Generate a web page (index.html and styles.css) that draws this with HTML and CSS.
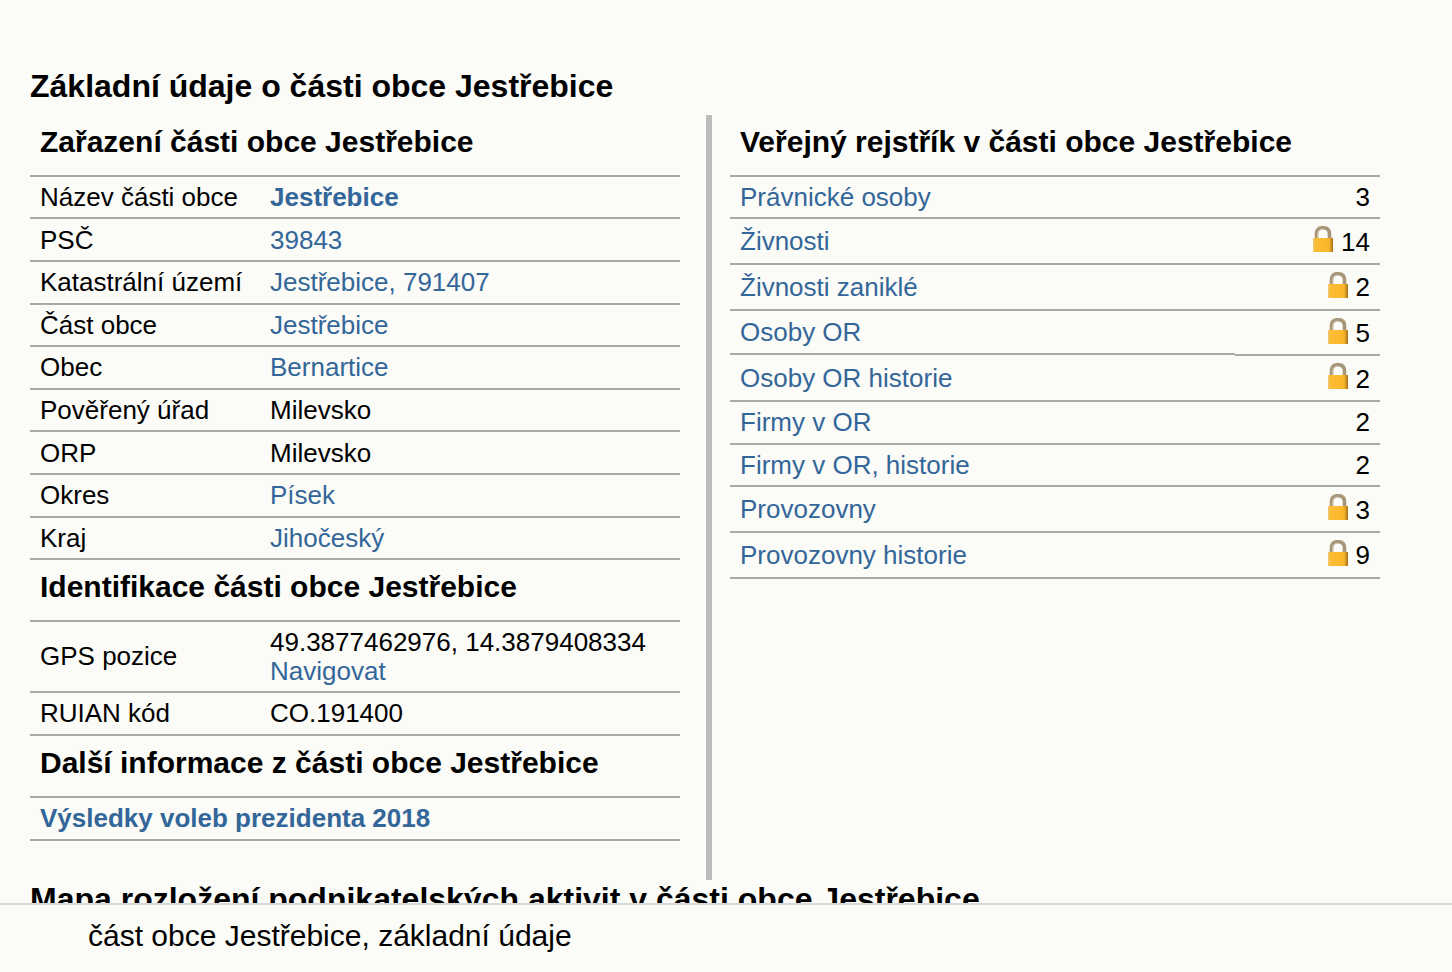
FILE: index.html
```html
<!DOCTYPE html>
<html lang="cs">
<head>
<meta charset="utf-8">
<title>Jestřebice</title>
<link rel="stylesheet" href="styles.css">
</head>
<body>
<svg class="defs" width="0" height="0" aria-hidden="true">
  <defs>
    <linearGradient id="lockBody" x1="0" x2="1" y1="0" y2="0">
      <stop offset="0" stop-color="#f0c878"/>
      <stop offset="0.12" stop-color="#fbbd35"/>
      <stop offset="0.8" stop-color="#fab62a"/>
      <stop offset="1" stop-color="#a8701a"/>
    </linearGradient>
    <symbol id="lock" viewBox="0 0 20 26">
      <path d="M3.500 13V8C3.500 3.500 6 1.700 10 1.700S16.500 3.500 16.500 8V13" fill="none" stroke="#a89678" stroke-width="3.600"/>
      <path d="M4.800 12V8C4.800 4.800 7 3.200 10 3.200" fill="none" stroke="#d8d0c0" stroke-width="1"/>
      <rect x="0" y="12" width="20" height="14" fill="url(#lockBody)"/>
    </symbol>
  </defs>
</svg>
<main class="page">
  <h1 class="title">Základní údaje o části obce Jestřebice</h1>
  <div class="columns">
    <section class="col">
      <h2 class="head">Zařazení části obce Jestřebice</h2>
      <div class="rows">
        <div class="row"><span class="key">Název části obce</span><a class="val strong">Jestřebice</a></div>
        <div class="row"><span class="key">PSČ</span><a class="val">39843</a></div>
        <div class="row"><span class="key">Katastrální území</span><a class="val">Jestřebice, 791407</a></div>
        <div class="row"><span class="key">Část obce</span><a class="val">Jestřebice</a></div>
        <div class="row"><span class="key">Obec</span><a class="val">Bernartice</a></div>
        <div class="row"><span class="key">Pověřený úřad</span><span class="val">Milevsko</span></div>
        <div class="row"><span class="key">ORP</span><span class="val">Milevsko</span></div>
        <div class="row"><span class="key">Okres</span><a class="val">Písek</a></div>
        <div class="row"><span class="key">Kraj</span><a class="val">Jihočeský</a></div>
      </div>
      <h2 class="head">Identifikace části obce Jestřebice</h2>
      <div class="rows">
        <div class="row row-tall"><span class="key">GPS pozice</span><span class="val stack"><span>49.3877462976, 14.3879408334</span><a>Navigovat</a></span></div>
        <div class="row"><span class="key">RUIAN kód</span><span class="val">CO.191400</span></div>
      </div>
      <h2 class="head head-last">Další informace z části obce Jestřebice</h2>
      <div class="rows">
        <div class="row"><a class="key strong">Výsledky voleb prezidenta 2018</a></div>
      </div>
    </section>
    <div class="divider"></div>
    <section class="col">
      <h2 class="head">Veřejný rejstřík v části obce Jestřebice</h2>
      <div class="rows">
        <div class="reg"><a class="name">Právnické osoby</a><span class="count">3</span></div>
        <div class="reg reg-lock"><a class="name">Živnosti</a><span class="count"><svg class="lock"><use href="#lock"/></svg>14</span></div>
        <div class="reg reg-lock"><a class="name">Živnosti zaniklé</a><span class="count"><svg class="lock"><use href="#lock"/></svg>2</span></div>
        <div class="reg reg-lock reg-step"><a class="name">Osoby OR</a><span class="count"><svg class="lock"><use href="#lock"/></svg>5</span></div>
        <div class="reg reg-lock"><a class="name">Osoby OR historie</a><span class="count"><svg class="lock"><use href="#lock"/></svg>2</span></div>
        <div class="reg"><a class="name">Firmy v OR</a><span class="count">2</span></div>
        <div class="reg"><a class="name">Firmy v OR, historie</a><span class="count">2</span></div>
        <div class="reg reg-lock"><a class="name">Provozovny</a><span class="count"><svg class="lock"><use href="#lock"/></svg>3</span></div>
        <div class="reg reg-lock"><a class="name">Provozovny historie</a><span class="count"><svg class="lock"><use href="#lock"/></svg>9</span></div>
      </div>
    </section>
  </div>
  <h2 class="map-title">Mapa rozložení podnikatelských aktivit v části obce Jestřebice</h2>
</main>
<footer class="footer">část obce Jestřebice, základní údaje</footer>
</body>
</html>
```
FILE: styles.css
```css
html, body {
  margin: 0;
  height: 100%;
  overflow: hidden;
}
body {
  background: #fbfbf7;
  color: #000;
  font-family: "Liberation Sans", Arial, sans-serif;
  font-size: 26px;
}
a { color: #336699; }
.defs { position: absolute; }
.page { padding: 67px 0 0 30px; }
.title {
  margin: 0;
  font-size: 32px;
  line-height: 38px;
  font-weight: bold;
}
.columns {
  display: flex;
  margin-top: 10px;
  height: 765px;
}
.col { width: 650px; }
.divider {
  width: 6px;
  margin: 0 18px 0 26px;
  background: #bbbbbb;
}
.head {
  margin: 0;
  box-sizing: border-box;
  height: 59.800px;
  padding: 9.500px 0 0 10px;
  font-size: 30px;
  line-height: 34px;
  font-weight: bold;
}
.head-last {
  height: 60.200px;
  padding-top: 10.200px;
}
.rows { border-top: 2px solid #aaaaaa; }
.row {
  display: flex;
  align-items: center;
  min-height: 40.600px;
  border-bottom: 2px solid #aaaaaa;
  line-height: 30px;
}
.row-tall { padding: 5.600px 0; }
.key {
  width: 230px;
  padding-left: 10px;
  flex: none;
}
.row-tall .key { padding-bottom: 1px; }
.row .key.strong { width: auto; }
.strong { font-weight: bold; }
.stack {
  display: flex;
  flex-direction: column;
  line-height: 29px;
}
.reg {
  display: flex;
  line-height: 30px;
}
.name {
  flex: 1;
  padding: 5.300px 0 5.300px 10px;
  border-bottom: 2px solid #aaaaaa;
}
.count {
  width: 135px;
  padding: 5.300px 10px 5.300px 0;
  border-bottom: 2px solid #aaaaaa;
  display: flex;
  align-items: center;
  justify-content: flex-end;
}
.reg-lock .name { padding: 6.500px 0 7.200px 10px; }
.reg-lock .count { padding: 7.300px 10px 6.400px 0; }
.reg-step .name { margin-bottom: 1px; padding-bottom: 6.200px; }
.lock {
  width: 20px;
  height: 26px;
  margin: -5px 8px 0 0;
}
.map-title {
  margin: 0;
  font-size: 32px;
  line-height: 38px;
  font-weight: bold;
}
.footer {
  position: fixed;
  left: 0;
  right: 0;
  bottom: 0;
  height: 67px;
  border-top: 2px solid #d8d8d8;
  background: #fbfbf7;
  padding-left: 88px;
  font-size: 30px;
  line-height: 62px;
}
```
